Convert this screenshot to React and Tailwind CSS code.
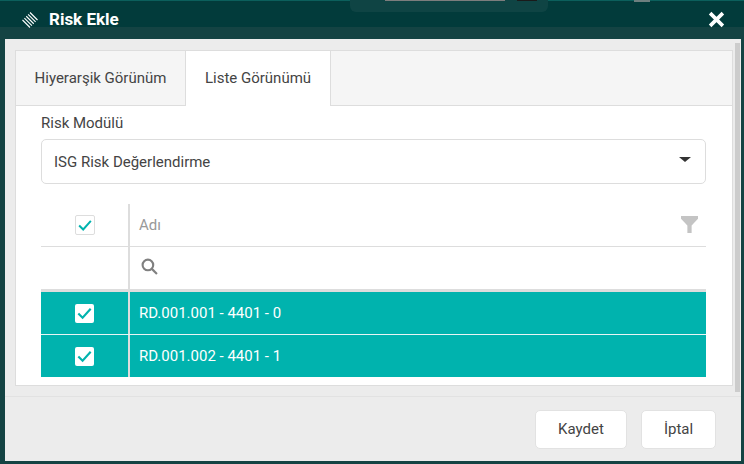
import React from 'react';

const Check = ({ className = 'text-[#00b3ae]' }) => (
  <svg viewBox="0 0 20 20" className={`w-5 h-5 ${className}`} fill="none" stroke="currentColor" strokeWidth="2.2">
    <path d="M3.5 10.5 L8 15 L16.5 5.5" />
  </svg>
);

const Row = ({ label, last }) => (
  <div className={`flex bg-[#00b3ae] text-white ${last ? 'h-[42px]' : 'h-[43px] border-b border-[#e8f5f5]'}`}>
    <div className="w-[87px] flex items-center justify-center">
      <div className="w-[19px] h-[19px] bg-white rounded-[2px] flex items-center justify-center">
        <Check />
      </div>
    </div>
    <div className="w-[2px] bg-[#dddddd]" />
    <div className="flex items-center pl-[9px] pt-[1px] text-[15px]">{label}</div>
  </div>
);

export default function App() {
  return (
    <div className="relative w-[744px] h-[464px] overflow-hidden bg-[#144343] font-['Roboto',sans-serif]">
      {/* page behind the modal overlay */}
      <div className="absolute left-0 top-0 w-full h-[27px] bg-[#023b3b]" />
      <div className="absolute left-0 top-0 w-full h-[1px] bg-[#0b5f5c]" />
      <div className="absolute left-[350px] top-0 w-[198px] h-[12px] rounded-b-md bg-[#0f4444]" />
      <div className="absolute left-[385px] top-0 w-[120px] h-[1px] bg-[#7d7d7d]" />
      <div className="absolute left-[517px] top-0 w-[20px] h-[1px] bg-[#1a1a1a]" />
      <div className="absolute left-[634px] top-0 w-[16px] h-[2px] bg-[#6d7f7f]" />

      <div className="relative flex items-center justify-between h-[39px] text-white">
        <div className="flex items-center pl-[22px] gap-[11px]">
          <svg viewBox="0 0 16 16" className="w-[16px] h-[16px]" stroke="white" strokeWidth="1.1">
            <path d="M8 .5 L15.5 8 M6.1 2.4 L13.6 9.9 M4.25 4.25 L11.75 11.75 M2.4 6.1 L9.9 13.6 M.5 8 L8 15.5" />
          </svg>
          <span className="text-[17px] font-bold leading-none">Risk Ekle</span>
        </div>
        <svg viewBox="0 0 16 16" className="w-[17px] h-[17px] mr-[19px]" stroke="white" strokeWidth="3.4">
          <path d="M2 2 L14 14 M14 2 L2 14" />
        </svg>
      </div>

      <div className="relative ml-[5px] w-[736px] h-[422px] bg-[#ececec] flex flex-col">
        <div className="absolute right-[1px] top-[4px] w-[5px] h-[349px] bg-[#cccccc]" />

        <div className="ml-[10px] mt-[11px] w-[718px] h-[336px] border border-[#dddddd] bg-white flex flex-col shrink-0">
          <div className="flex h-[55px] bg-[#f5f5f5] border-b border-[#dddddd] shrink-0">
            <div className="w-[170px] flex items-center justify-center text-[15px] text-[#444444] border-r border-[#dddddd]">
              Hiyerarşik Görünüm
            </div>
            <div className="w-[145px] h-[55px] bg-white flex items-center justify-center text-[15px] text-[#444444] border-r border-[#dddddd]">
              Liste Görünümü
            </div>
          </div>

          <div className="pl-[25px] pr-[26px] flex flex-col">
            <div className="text-[15px] leading-[16px] text-[#444444] mt-[9px]">Risk Modülü</div>
            <div className="mt-[8px] h-[45px] border border-[#dddddd] rounded-[5px] flex items-center justify-between pl-[12px] pr-[14px] text-[15px] text-[#444444]">
              <span className="mt-[1px]">ISG Risk Değerlendirme</span>
              <span className="w-0 h-0 border-x-[6px] border-x-transparent border-t-[5px] border-t-[#333333] -mt-[4px]" />
            </div>

            <div className="mt-[20px] flex h-[43px] border-b border-[#dddddd]">
              <div className="w-[87px] flex items-center justify-center">
                <div className="w-[20px] h-[20px] border border-[#dddddd] rounded-[2px] flex items-center justify-center">
                  <Check />
                </div>
              </div>
              <div className="w-[2px] bg-[#dddddd]" />
              <div className="flex-1 flex items-center justify-between pl-[9px] text-[15px] text-[#999999]">
                <span>Adı</span>
                <svg viewBox="0 0 16 16" className="w-[17px] h-[17px] mr-[8px] mb-[2px]" fill="#c4c4c4">
                  <path d="M0 0 H16 V2.5 L10 9 V16 H6 V9 L0 2.5 Z" />
                </svg>
              </div>
            </div>

            <div className="flex h-[45px] border-b-[3px] border-[#dddddd]">
              <div className="w-[87px]" />
              <div className="w-[2px] bg-[#dddddd]" />
              <div className="flex items-center pl-[11px] pb-[3px]">
                <svg viewBox="0 0 16 16" className="w-[17px] h-[17px]" fill="none" stroke="#808080" strokeWidth="2">
                  <circle cx="6.5" cy="6.5" r="5" />
                  <path d="M10 10 L15 15" />
                </svg>
              </div>
            </div>

            <Row label="RD.001.001 - 4401 - 0" />
            <Row label="RD.001.002 - 4401 - 1" last />
          </div>
        </div>

        <div className="mt-[10px] border-t border-[#e2e2e2] flex justify-end gap-[14px] pt-[13px] pr-[25px]">
          <div className="w-[92px] h-[39px] bg-white border border-[#e2e2e2] rounded-[5px] flex items-center justify-center text-[15px] text-[#444444]">
            Kaydet
          </div>
          <div className="w-[75px] h-[39px] bg-white border border-[#e2e2e2] rounded-[5px] flex items-center justify-center text-[15px] text-[#444444]">
            İptal
          </div>
        </div>
      </div>
    </div>
  );
}
